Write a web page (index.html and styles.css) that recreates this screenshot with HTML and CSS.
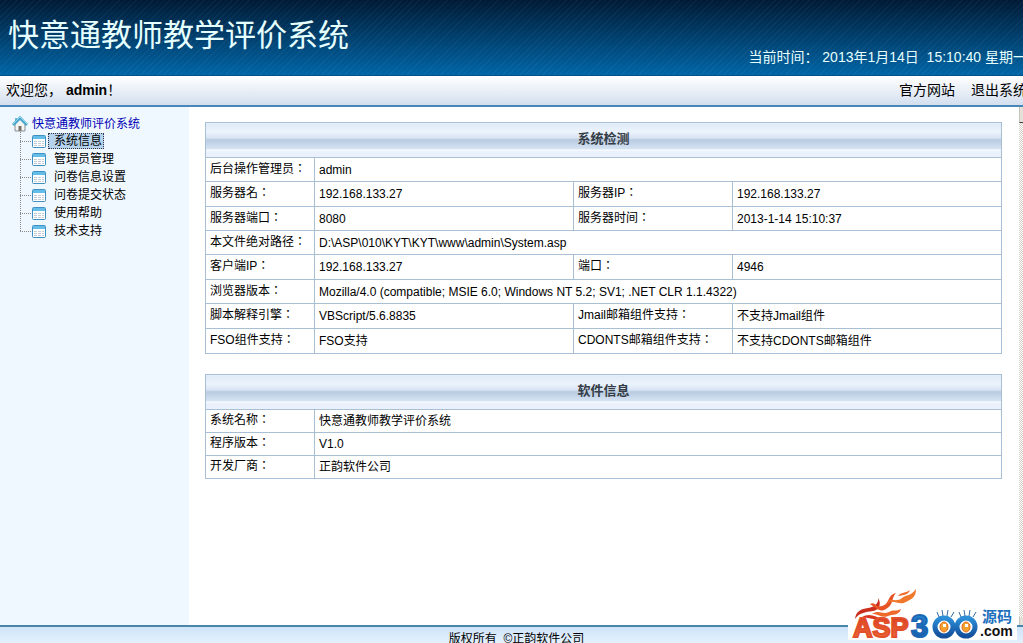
FILE: index.html
```html
<!DOCTYPE html>
<html lang="zh-CN">
<head>
<meta charset="UTF-8">
<title>快意通教师教学评价系统</title>
<link rel="stylesheet" href="styles.css">
</head>
<body>

<svg class="sprite" aria-hidden="true">
<defs>
<symbol id="page" viewBox="0 0 14 13">
<rect x="0.5" y="0.5" width="13" height="12" rx="1" fill="#fff" stroke="#3f8fc0"/>
<rect x="1" y="1" width="12" height="3" fill="#62bde8"/>
<path d="M2 6.5h3M6 6.5h3M10 6.5h2M2 8.5h3M6 8.5h3M10 8.5h2M2 10.5h3M6 10.5h3M10 10.5h2" stroke="#c3cdd8"/>
</symbol>
</defs>
</svg>

<header class="banner">
<h1>快意通教师教学评价系统</h1>
<p class="clock">当前时间：&nbsp;2013年1月14日&nbsp; 15:10:40 星期一</p>
</header>

<div class="welcome">
<p>欢迎您，&nbsp;<strong>admin</strong>！</p>
<nav>
<a href="#">官方网站</a>
<a href="#">退出系统</a>
</nav>
</div>

<div class="frames">
<aside class="sidebar">
<a class="root" href="#">
<svg width="16" height="16" viewBox="0 0 16 16">
<path d="M3 8v7h10V8L8 3z" fill="#f4f4f2" stroke="#8a8f94"/>
<path d="M3 2h2v4H3z" fill="#69b8d8"/>
<path d="M1 9L8 2l7 7" fill="none" stroke="#4ba6cc" stroke-width="3"/>
<path d="M1 8L8 1l7 7" fill="none" stroke="#8fd6ee"/>
<path d="M6.500 10h3v5h-3z" fill="#77726c"/>
</svg>
<span>快意通教师评价系统</span>
</a>
<ul class="tree">
<li><svg width="14" height="13"><use href="#page"/></svg><a class="selected" href="#">系统信息</a></li>
<li><svg width="14" height="13"><use href="#page"/></svg><a href="#">管理员管理</a></li>
<li><svg width="14" height="13"><use href="#page"/></svg><a href="#">问卷信息设置</a></li>
<li><svg width="14" height="13"><use href="#page"/></svg><a href="#">问卷提交状态</a></li>
<li><svg width="14" height="13"><use href="#page"/></svg><a href="#">使用帮助</a></li>
<li><svg width="14" height="13"><use href="#page"/></svg><a href="#">技术支持</a></li>
</ul>
</aside>

<main class="content">
<table class="info">
<colgroup><col class="label"><col><col class="label2"><col class="value2"></colgroup>
<thead>
<tr><th colspan="4">系统检测</th></tr>
</thead>
<tbody>
<tr><th scope="row">后台操作管理员：</th><td colspan="3">admin</td></tr>
<tr class="pair"><th scope="row">服务器名：</th><td>192.168.133.27</td><th scope="row">服务器IP：</th><td>192.168.133.27</td></tr>
<tr><th scope="row">服务器端口：</th><td>8080</td><th scope="row">服务器时间：</th><td>2013-1-14 15:10:37</td></tr>
<tr><th scope="row">本文件绝对路径：</th><td colspan="3">D:\ASP\010\KYT\KYT\www\admin\System.asp</td></tr>
<tr class="pair"><th scope="row">客户端IP：</th><td>192.168.133.27</td><th scope="row">端口：</th><td>4946</td></tr>
<tr><th scope="row">浏览器版本：</th><td colspan="3">Mozilla/4.0 (compatible; MSIE 6.0; Windows NT 5.2; SV1; .NET CLR 1.1.4322)</td></tr>
<tr class="pair"><th scope="row">脚本解释引擎：</th><td>VBScript/5.6.8835</td><th scope="row">Jmail邮箱组件支持：</th><td>不支持Jmail组件</td></tr>
<tr class="pair"><th scope="row">FSO组件支持：</th><td>FSO支持</td><th scope="row">CDONTS邮箱组件支持：</th><td>不支持CDONTS邮箱组件</td></tr>
</tbody>
</table>

<table class="info soft">
<colgroup><col class="label"><col></colgroup>
<thead>
<tr><th colspan="2">软件信息</th></tr>
</thead>
<tbody>
<tr><th scope="row">系统名称：</th><td>快意通教师教学评价系统</td></tr>
<tr><th scope="row">程序版本：</th><td>V1.0</td></tr>
<tr><th scope="row">开发厂商：</th><td>正韵软件公司</td></tr>
</tbody>
</table>
</main>

<div class="scroll"><i></i><i class="down"></i></div>
</div>

<footer class="copyright">版权所有&nbsp; ©正韵软件公司</footer>

<svg class="stamp" width="169" height="54" viewBox="0 0 169 54">
<defs>
<linearGradient id="fire" x1="0" y1="0" x2="0" y2="1">
<stop offset="0" stop-color="#d3321c"/>
<stop offset="1" stop-color="#f47a3a"/>
</linearGradient>
<linearGradient id="sea" x1="0" y1="0" x2="0" y2="1">
<stop offset="0" stop-color="#2d8fd8"/>
<stop offset="1" stop-color="#124f9c"/>
</linearGradient>
</defs>
<rect y="30" width="169" height="24" fill="#fff"/>
<path d="M7 33C8 25 13 23 20 22C27 21 31 17 30 12C34 18 31 24 25 25C17 26 11 27 7 33z" fill="#c92f1c"/>
<path d="M22 18C28 15 27 22 34 20C42 18 39 9 48 7C43 12 46 19 38 23C32 27 28 22 22 18z" fill="#e85324"/>
<path d="M39 17C43 11 48 17 54 12C59 8 62 11 68 3C68 12 63 13 58 16C51 20 46 13 39 17z" fill="#f0782c"/>
<path d="M50 10C53 6 58 7 62 4C60 9 56 9 50 10z" fill="#ef6b28"/>
<path d="M24 28C31 23 34 29 41 26C45 23 48 26 53 23C51 30 44 28 40 30C34 33 30 27 24 28z" fill="#ee6a2a"/>
<path d="M14 31C20 27 28 29 35 35C27 33 20 32 14 31z" fill="#d8361f"/>
<text class="asp" x="5" y="51">ASP</text>
<text class="num" x="63" y="51">3</text>
<g fill="#fff" stroke="url(#sea)" stroke-width="5">
<ellipse cx="96" cy="41" rx="9" ry="9"/>
<ellipse cx="118" cy="41" rx="9" ry="9"/>
</g>
<g fill="#f3a22e" stroke="#e46a1d">
<ellipse cx="96" cy="41" rx="4" ry="5"/>
<ellipse cx="118" cy="41" rx="4" ry="5"/>
</g>
<path d="M95 38h3v3h-3zM117 38h3v3h-3z" fill="#fff"/>
<path d="M91 31l-2-5m6 4l-1-6m5 6l1-6m3 7l3-5M113 31l-2-5m6 4l-1-6m5 6l1-6m3 7l3-5" fill="none" stroke="#37699f"/>
<text class="cn" x="134" y="36">源码</text>
<text class="com" x="132" y="50">.com</text>
</svg>

</body>
</html>
```
FILE: styles.css
```css
*{
box-sizing: border-box;
}

body{
margin: 0;
height: 100vh;
display: flex;
flex-direction: column;
overflow: hidden;
position: relative;
background: #fff;
color: #000;
font: 12px/16px "Liberation Sans", "Noto Sans CJK SC", sans-serif;
}

a{
color: inherit;
text-decoration: none;
}

p, h1, ul{
margin: 0;
padding: 0;
}

.sprite{
position: absolute;
width: 0;
height: 0;
}

/* top banner */
.banner{
display: flex;
justify-content: space-between;
height: 76px;
padding-left: 8px;
border-bottom: 1px solid #00508a;
color: #e6ffff;
white-space: nowrap;
background:
	repeating-linear-gradient(135deg, rgba(255,255,255,0.04) 0 1px, transparent 1px 4px),
	linear-gradient(#001a35, #003c68 45%, #0065a6);
}

.banner h1{
padding-top: 16px;
font-size: 31px;
line-height: 40px;
font-weight: normal;
}

.clock{
align-self: flex-end;
margin-right: -4px;
padding-bottom: 8px;
font-size: 14px;
line-height: 20px;
}

.welcome{
display: flex;
justify-content: space-between;
height: 31px;
padding-left: 6px;
border-bottom: 2px solid #4a86b8;
background: linear-gradient(#fff, #d3dfef);
font-size: 14px;
line-height: 29px;
white-space: nowrap;
}

.welcome nav{
display: flex;
gap: 16px;
margin-right: -4px;
}

.frames{
flex: 1;
display: flex;
min-height: 0;
}

/* tree menu */
.sidebar{
width: 189px;
padding: 8px 0 0 12px;
background: #f0f8ff;
}

.root{
display: flex;
gap: 4px;
height: 17px;
color: #0000b4;
line-height: 18px;
}

.root svg{
margin-top: 1px;
}

.tree{
margin-left: 8px;
list-style: none;
}

.tree li{
display: flex;
align-items: center;
height: 18px;
padding-left: 12px;
background:
	repeating-linear-gradient(#888 0 1px, transparent 1px 2px) 0 0 / 1px 100% no-repeat,
	repeating-linear-gradient(90deg, #888 0 1px, transparent 1px 2px) 0 9px / 12px 1px no-repeat;
}

.tree li:last-child{
background-size: 1px 50%, 12px 1px;
}

.tree a{
margin-left: 2px;
padding: 0 1px 0 5px;
border: 1px dotted transparent;
line-height: 14px;
}

.tree .selected{
background: #b5d3ec;
border-color: #334;
}

/* tables */
.content{
flex: 1;
padding: 15px 17px 0 16px;
}

.info{
width: 100%;
table-layout: fixed;
border-collapse: collapse;
}

.info .label{
width: 109px;
}

.info .label2{
width: 159px;
}

.info .value2{
width: 269px;
}

.info th, .info td{
height: 24px;
padding: 0 4px;
border: 1px solid #a9bfd4;
text-align: left;
font-weight: normal;
white-space: nowrap;
}

/* centred full-width colon in the labels */
.info tbody th{
padding-bottom: 2px;
font-family: "Liberation Sans", "Noto Sans CJK TC", sans-serif;
font-feature-settings: "locl" 0;
}

.info .pair th, .info .pair td{
height: 25px;
}

.info thead th{
height: 35px;
padding-bottom: 2px;
text-align: center;
font-size: 13px;
font-weight: bold;
color: #343c46;
background: linear-gradient(#dfeaf7, #ebf3fc 25%, #d6e2f1 44%, #b7cae0 47%, #d7e4f3 76%, #fff 77%, #fff 79%, #eaf1fd 80%);
}

.soft{
margin-top: 20px;
}

.soft tbody th, .soft tbody td{
height: 23px;
}

.scroll{
display: flex;
flex-direction: column;
justify-content: space-between;
width: 4px;
background: repeating-conic-gradient(#d4d0c8 0 25%, #fff 0 50%) 0 0 / 2px 2px;
}

.scroll i{
height: 16px;
border-left: 1px solid #c8c4bc;
border-bottom: 1px solid #404040;
background: #e4e1db;
}

.scroll .down{
height: 8px;
border-bottom: 0;
}

.copyright{
height: 18px;
padding: 4px 0 0 10px;
border-top: 2px solid #4a86a8;
background: linear-gradient(#cfe4f8, #e4f1fd);
text-align: center;
}

/* site stamp over the bottom corner */
.stamp{
position: absolute;
right: 6px;
bottom: 3px;
}

.stamp text{
font-family: "Liberation Sans", "Noto Sans CJK SC", sans-serif;
font-weight: bold;
}

.stamp .asp{
font-size: 27px;
fill: url(#fire);
stroke: #e2502c;
stroke-width: 2px;
}

.stamp .num{
font-size: 31px;
fill: url(#sea);
stroke: #1c67b5;
stroke-width: 2px;
}

.stamp .cn{
font-size: 15px;
fill: #1b6fbc;
}

.stamp .com{
font-size: 14px;
fill: #111;
}
```
